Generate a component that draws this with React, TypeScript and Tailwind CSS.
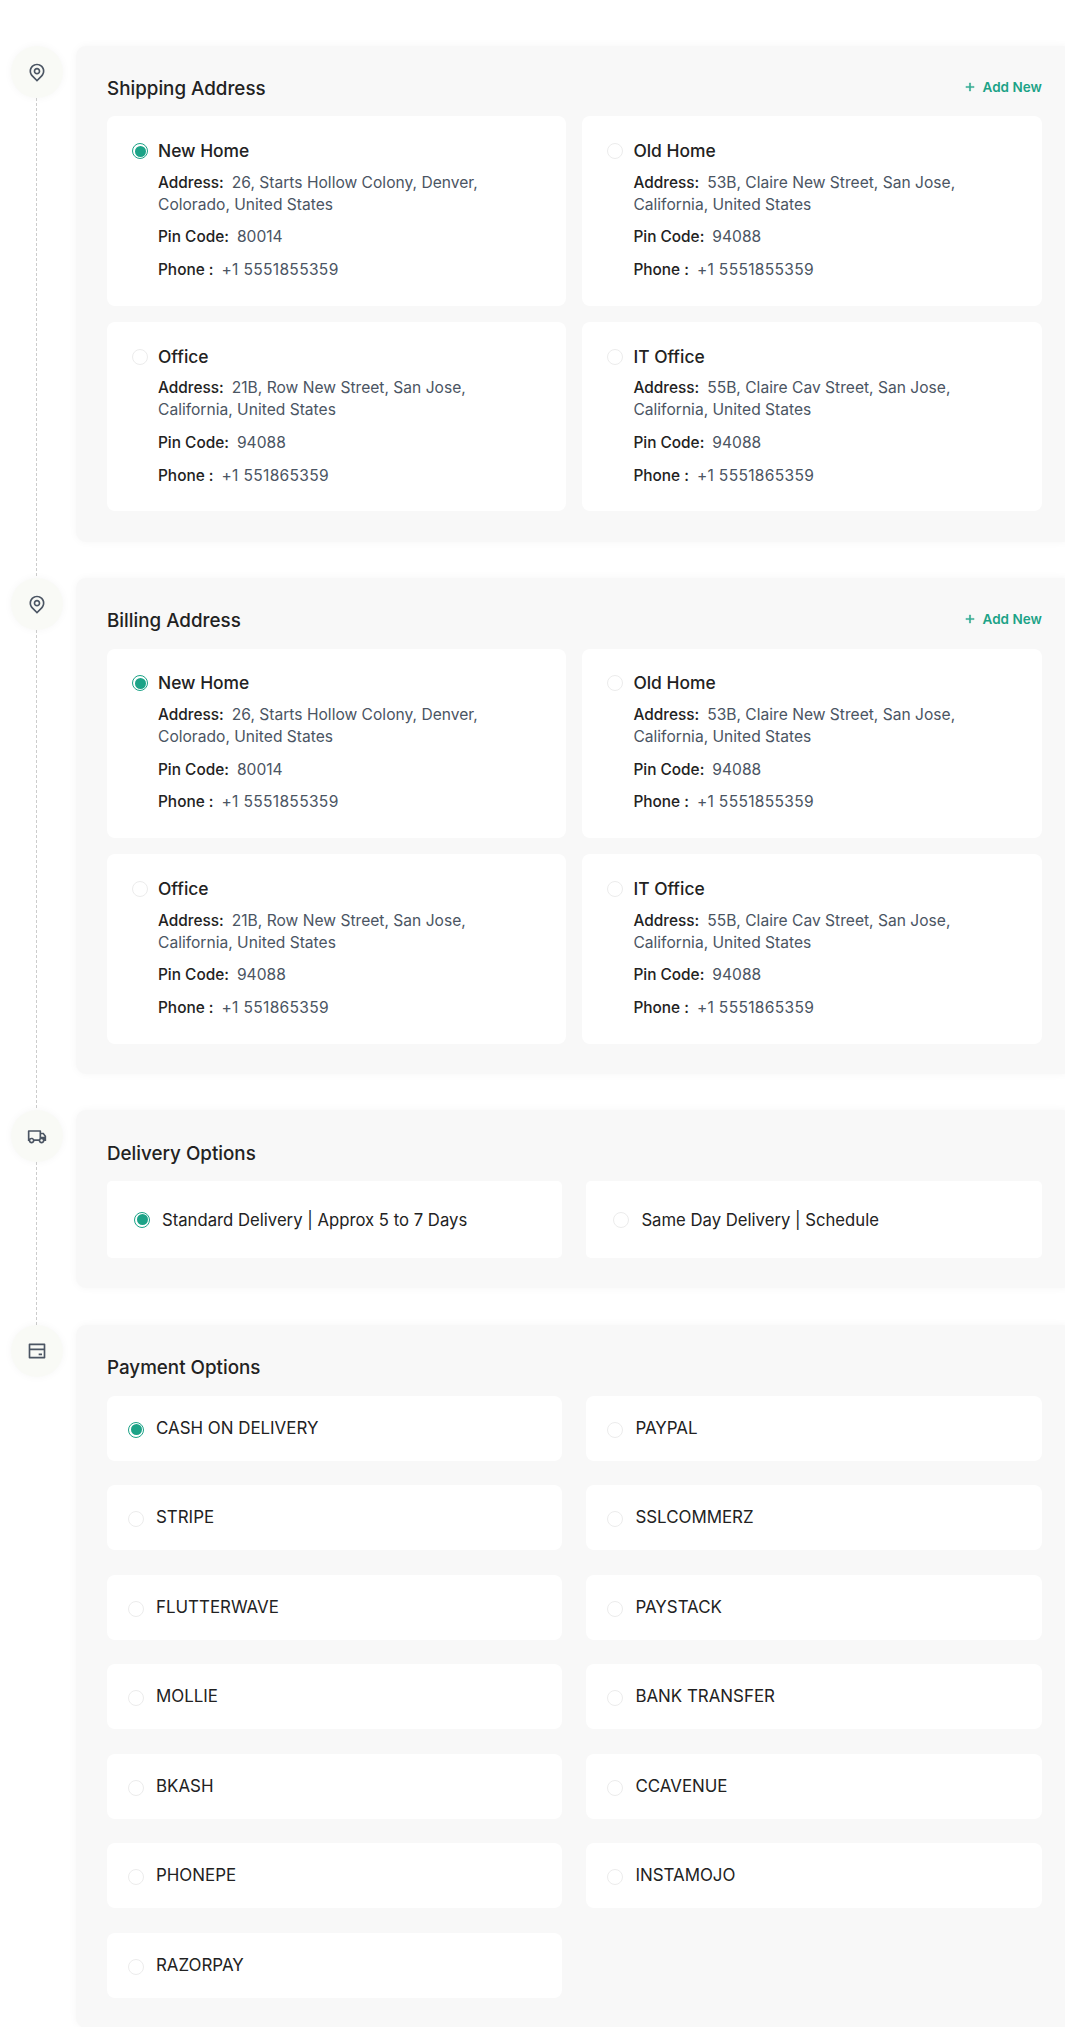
import { useState } from "react";
import type { ReactNode } from "react";
import { RiAddLine, RiBankCardLine, RiMapPinLine, RiTruckLine } from "react-icons/ri";

type Address = { name: string; address: string; pin: string; phone: string };

const addresses: Address[] = [
  { name: "New Home", address: "26, Starts Hollow Colony, Denver, Colorado, United States", pin: "80014", phone: "+1 5551855359" },
  { name: "Old Home", address: "53B, Claire New Street, San Jose, California, United States", pin: "94088", phone: "+1 5551855359" },
  { name: "Office", address: "21B, Row New Street, San Jose, California, United States", pin: "94088", phone: "+1 551865359" },
  { name: "IT Office", address: "55B, Claire Cav Street, San Jose, California, United States", pin: "94088", phone: "+1 5551865359" },
];

const deliveries = ["Standard Delivery | Approx 5 to 7 Days", "Same Day Delivery | Schedule"];

const payments = [
  "CASH ON DELIVERY", "PAYPAL", "STRIPE", "SSLCOMMERZ", "FLUTTERWAVE", "PAYSTACK", "MOLLIE",
  "BANK TRANSFER", "BKASH", "CCAVENUE", "PHONEPE", "INSTAMOJO", "RAZORPAY",
];

function Radio({ checked }: { checked: boolean }) {
  return (
    <span
      className={
        "flex size-4 shrink-0 items-center justify-center rounded-full border " +
        (checked ? "border-[#1ca387]" : "border-[#ececec]")
      }
    >
      {checked && <span className="size-[11px] rounded-full bg-[#1ca387]" />}
    </span>
  );
}

function Section({ icon, title, action, last, children }: { icon: ReactNode; title: string; action?: boolean; last?: boolean; children: ReactNode }) {
  return (
    <section className="flex gap-[13px]">
      <div className="flex w-[52px] shrink-0 flex-col">
        <div className="flex size-[52px] shrink-0 items-center justify-center rounded-full bg-[#f9faf6] text-[20px] text-[#4b5563] shadow-[0_0_8px_rgba(0,0,0,0.04)]">
          {icon}
        </div>
        {!last && (
          <div className="ml-[25px] w-px flex-1 bg-[repeating-linear-gradient(to_bottom,#cccccc_0_3px,transparent_3px_5px)]" />
        )}
      </div>
      <div className={last ? "" : "pb-[36.2px]"}>
        <div className="w-[996px] rounded-[10px] bg-[#f8f8f8] pt-[29.2px] pr-[30.2px] pb-[30.4px] pl-[31px] shadow-[0_0_8px_rgba(0,0,0,0.04)]">
          <div className="mb-[13.6px] flex h-7 items-center justify-between">
            <h2 className="text-[18.8px] font-medium text-[#222222]">{title}</h2>
            {action && (
              <button className="mb-1 flex items-center gap-1.5 text-[13.5px] font-semibold text-[#1ca387]">
                <RiAddLine className="size-[14px]" strokeWidth={0.6} />
                Add New
              </button>
            )}
          </div>
          {children}
        </div>
      </div>
    </section>
  );
}

function Field({ label, children }: { label: string; children: ReactNode }) {
  return (
    <p className="text-[15.6px] leading-[22.2px] text-[#4b5563]">
      <span className="mr-2 text-[15.4px] font-medium text-[#222222]">{label}</span>
      {children}
    </p>
  );
}

function AddressGrid() {
  const [selected, setSelected] = useState(0);
  return (
    <div className="grid grid-cols-2 gap-4">
      {addresses.map((item, i) => (
        <div
          key={item.name}
          onClick={() => setSelected(i)}
          className="flex h-[189.5px] cursor-pointer gap-[10px] rounded-lg bg-white pt-[22.6px] pl-[25px]"
        >
          <div className="flex h-6 items-center">
            <Radio checked={selected === i} />
          </div>
          <div className="w-[372px]">
            <h3 className="text-[17.4px] leading-6 font-medium text-[#222222]">{item.name}</h3>
            <div className="mt-[8.6px] flex flex-col gap-[10.4px]">
              <Field label="Address:">{item.address}</Field>
              <Field label="Pin Code:">{item.pin}</Field>
              <Field label="Phone :">
                <span className="tracking-[0.3px]">{item.phone}</span>
              </Field>
            </div>
          </div>
        </div>
      ))}
    </div>
  );
}

function DeliveryGrid() {
  const [selected, setSelected] = useState(0);
  return (
    <div className="grid grid-cols-2 gap-6">
      {deliveries.map((name, i) => (
        <div
          key={name}
          onClick={() => setSelected(i)}
          className="flex h-[76.8px] cursor-pointer items-center gap-3 rounded-[5px] bg-white pl-[27px]"
        >
          <Radio checked={selected === i} />
          <span className="text-[16.7px] leading-6 text-[#222222]">{name}</span>
        </div>
      ))}
    </div>
  );
}

function PaymentGrid() {
  const [selected, setSelected] = useState(0);
  return (
    <div className="grid grid-cols-2 gap-x-6 gap-y-[24.5px] pt-[0.4px]">
      {payments.map((name, i) => (
        <div
          key={name}
          onClick={() => setSelected(i)}
          className="flex h-[65px] cursor-pointer items-center gap-3 rounded-lg bg-white pl-[21px]"
        >
          <span className="pt-[3px]">
            <Radio checked={selected === i} />
          </span>
          <span className="-mt-px text-[16.9px] leading-6 text-[#222222]">{name}</span>
        </div>
      ))}
    </div>
  );
}

export default function App() {
  return (
    <main className="h-[2027px] w-full overflow-hidden bg-white pt-[45.7px] pl-[11px] font-['Inter',sans-serif]">
      <Section icon={<RiMapPinLine />} title="Shipping Address" action>
        <AddressGrid />
      </Section>
      <Section icon={<RiMapPinLine />} title="Billing Address" action>
        <AddressGrid />
      </Section>
      <Section icon={<RiTruckLine />} title="Delivery Options">
        <DeliveryGrid />
      </Section>
      <Section icon={<RiBankCardLine />} title="Payment Options" last>
        <PaymentGrid />
      </Section>
    </main>
  );
}
